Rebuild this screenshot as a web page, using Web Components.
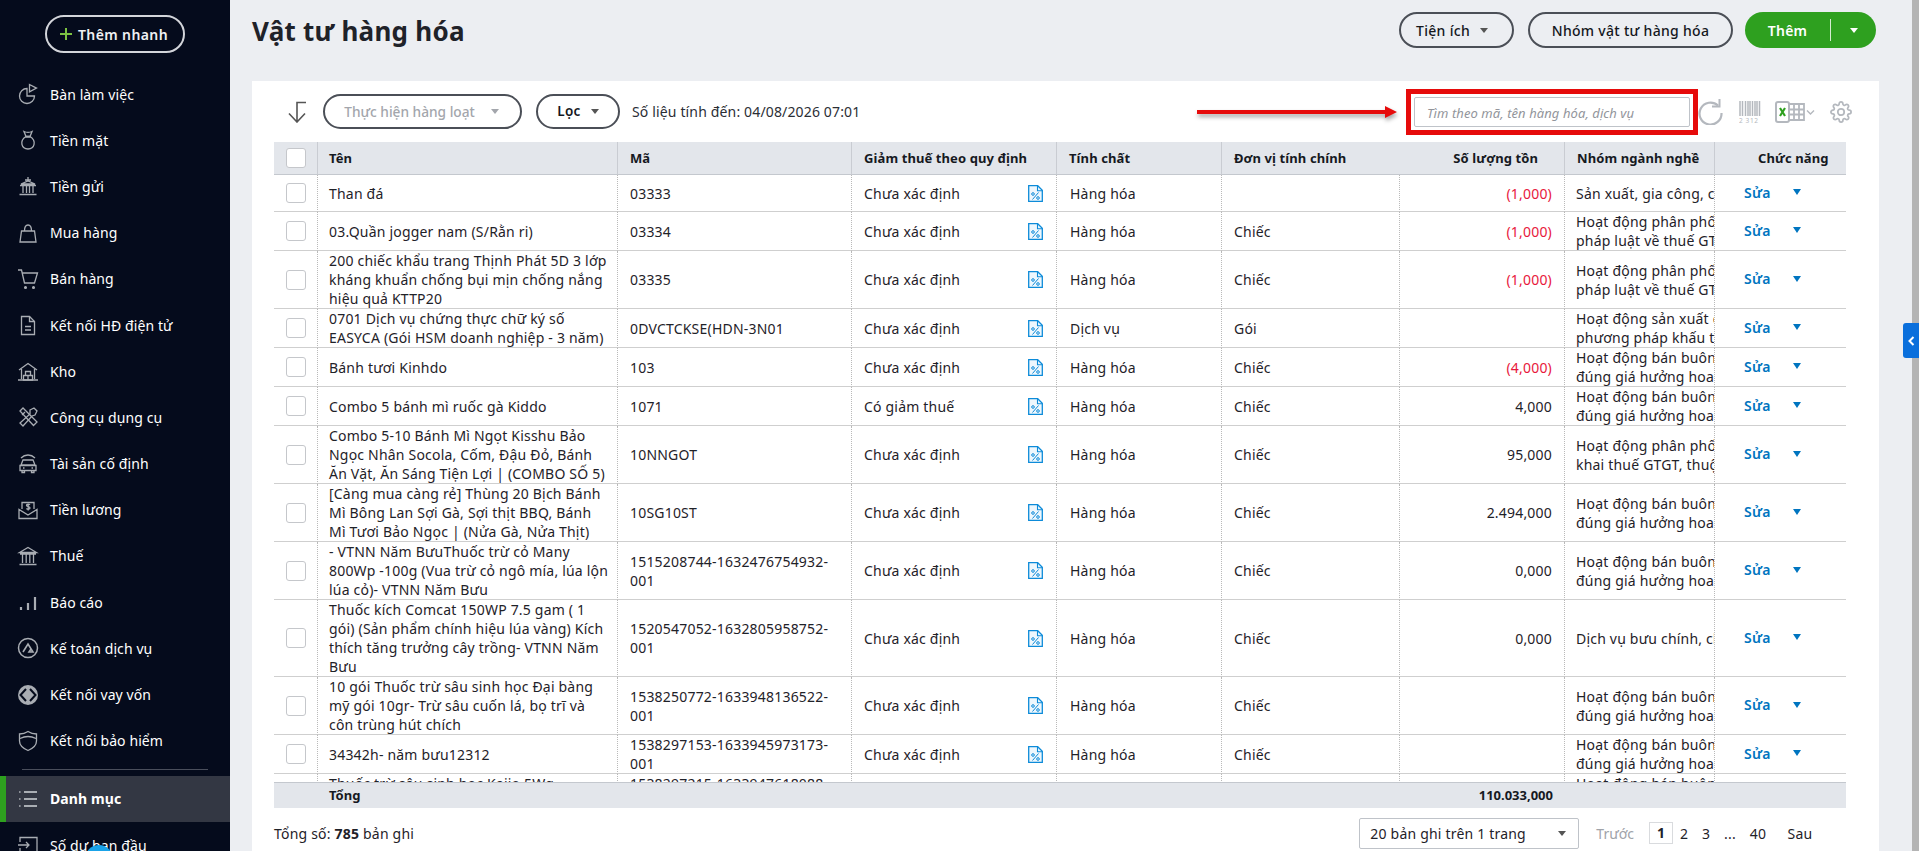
<!DOCTYPE html>
<html lang="vi">
<head>
<meta charset="utf-8">
<title>Vật tư hàng hóa</title>
<style>
  html, body { margin: 0; height: 851px; overflow: hidden; }
  body {
    display: flex;
    font: 14px/19px "Noto Sans", "Liberation Sans", sans-serif;
    letter-spacing: .2px;
    color: #1f2229;
    background: #eceef2;
  }
</style>
</head>
<body>
<app-sidebar>
  <nav-item icon="pie">Bàn làm việc</nav-item>
  <nav-item icon="bag">Tiền mặt</nav-item>
  <nav-item icon="bank">Tiền gửi</nav-item>
  <nav-item icon="shop">Mua hàng</nav-item>
  <nav-item icon="cart">Bán hàng</nav-item>
  <nav-item icon="doc">Kết nối HĐ điện tử</nav-item>
  <nav-item icon="store">Kho</nav-item>
  <nav-item icon="tools">Công cụ dụng cụ</nav-item>
  <nav-item icon="car">Tài sản cố định</nav-item>
  <nav-item icon="salary">Tiền lương</nav-item>
  <nav-item icon="tax">Thuế</nav-item>
  <nav-item icon="bars">Báo cáo</nav-item>
  <nav-item icon="service">Kế toán dịch vụ</nav-item>
  <nav-item icon="loan">Kết nối vay vốn</nav-item>
  <nav-item icon="shield">Kết nối bảo hiểm</nav-item>
  <hr-line></hr-line>
  <nav-item icon="list" active>Danh mục</nav-item>
  <nav-item icon="opening">Số dư ban đầu</nav-item>
</app-sidebar>
<goods-page></goods-page>

<script>
const NAV_ICONS = {
  pie: '<path d="M10 5.5a7.5 7.5 0 1 0 7.5 7.5H10z"/><path d="M12.5 1.5l7 3.6-7 3.8z"/>',
  bag: '<path d="M7 2.5c2 1 6 1 8 0l-2 5H9z"/><path d="M9 7.5C2 12 4.500 20 11 20s9-8 2-12.500z"/><path d="M8.500 8h5"/>',
  bank: '<path d="M11 2v2.500M8 5h6M4 9l7-3 7 3zM3 10.500h16M6 11v7M9.500 11v7M12.500 11v7M16 11v7M2.500 19.500h17"/>',
  shop: '<path d="M3 20l1.500-11h13L19 20z"/><path d="M7.500 9C7.500 1 14.500 1 14.500 9"/>',
  cart: '<path d="M1 2h3.500l3 13h10l3-10H5.500"/><circle cx="8.500" cy="19.500" r=".9" fill="#a9adb3"/><circle cx="16.500" cy="19.500" r=".9" fill="#a9adb3"/>',
  doc: '<path d="M4.500 2.500h8l5 5v13h-13z"/><path d="M12.500 2.500v5h5M8 12.500h6M8 16h6"/>',
  store: '<path d="M2 10l9-6.500 9 6.500M4.500 9v10M17.500 9v10M1 20h20"/><path d="M8.500 11.500h5v4h-5zM6.500 15.500h4.500v4.500H6.500zM11 15.500h4.500v4.500H11z"/>',
  tools: '<path d="M3 5l3-3 14 14-3.500 3.500zM8 6l-3 3"/><path d="M13 4l4-2 3 3-2 4-3 1-9 10-3-3 10-9z"/>',
  car: '<path d="M4 5C8 1 14 1 18 5"/><path d="M6 7h10l2 5H4zM3 12.500h16v5H3zM5 17.500v2h2.500v-2M14.500 17.500v2H17v-2"/><path d="M6 15h1.500M14.500 15H16"/>',
  salary: '<path d="M5 10V3.500h12V10M2 10.500v9h18v-9l-9 5.500z"/><path d="M13 5.800c-1-1-3.500-.8-3.500.6s3.500 1 3.500 2.500-2.500 1.500-3.600.5M11.200 4.500v7"/>',
  tax: '<path d="M2.500 7.500L11 2.500l8.500 5zM3 9h16M5.500 9.500v8.500M9.200 9.500v8.500M12.800 9.500v8.500M16.500 9.500v8.500M2.500 19.500h17"/>',
  bars: '<g stroke-width="2.200"><path d="M4 19v-3M11 19v-7M18 19V6"/></g>',
  service: '<circle cx="11" cy="11" r="9.500" stroke-width="1.500"/><path d="M6 15l5-8 5 8h-4l2-3" stroke-width="1.600"/>',
  loan: '<circle cx="11" cy="11" r="10" fill="#a9adb3" stroke="none"/><path d="M9 5l-5.500 6L9 17M13 5l5.500 6L13 17" stroke="#050b1c" stroke-width="2"/>',
  shield: '<path d="M11 1.500c3 2 6 2.500 8.500 2.500v7c0 5-5 8-8.500 9.500C7.500 19 2.500 16 2.500 11V4C5 4 8 3.500 11 1.500z"/><path d="M3 8.500c3-1.500 5.500-2 8-2s5 .5 8 2"/>',
  list: '<g stroke-width="2"><path d="M7 4h13M7 11h13M7 18h13"/></g><g stroke-width="1.600"><path d="M2 4h1.600M2 11h1.600M2 18h1.600"/></g>',
  opening: '<path d="M3 8V3.500h17v15H3V14M1 11h11M9 8l3 3-3 3"/>'
};

class AppSidebar extends HTMLElement {
  constructor() {
    super();
    this.attachShadow({ mode: "open" });
    this.shadowRoot.innerHTML = `
      <style>
        :host {
          display: block;
          flex: 0 0 230px;
          height: 851px;
          overflow: hidden;
          position: relative;
          background: #050b1c;
          color: #fff;
        }
        .quick-wrap { display: flex; justify-content: center; padding: 15px 0 18px; }
        .quick {
          box-sizing: border-box;
          width: 140px;
          height: 38px;
          border: 2px solid #d3d5da;
          border-radius: 19px;
          display: flex;
          align-items: center;
          justify-content: center;
          gap: 6px;
          padding-right: 2px;
          font-weight: 600;
          font-size: 14px;
          letter-spacing: .4px;
          color: #f0f1f3;
        }
        .fab {
          position: absolute;
          left: 85px;
          top: 845px;
          width: 28px;
          height: 28px;
          border-radius: 50%;
          background: #1aa3e8;
        }
      </style>
      <div class="quick-wrap">
        <div class="quick">
          <svg width="12" height="12" viewBox="0 0 12 12"><path d="M6 0v12M0 6h12" stroke="#7cc242" stroke-width="2"/></svg>
          <span>Thêm nhanh</span>
        </div>
      </div>
      <slot></slot>
      <div class="fab"></div>
    `;
  }
}

class HrLine extends HTMLElement {
  constructor() {
    super();
    this.attachShadow({ mode: "open" });
    this.shadowRoot.innerHTML = `
      <style>
        :host { display: block; height: 1px; margin: 5px 22px 6px; background: #4a4e5b; }
      </style>
    `;
  }
}

class NavItem extends HTMLElement {
  constructor() {
    super();
    this.attachShadow({ mode: "open" });
  }

  connectedCallback() {
    const icon = NAV_ICONS[this.getAttribute("icon")] || "";
    this.shadowRoot.innerHTML = `
      <style>
        :host {
          display: flex;
          align-items: center;
          gap: 11px;
          box-sizing: border-box;
          height: 46.200px;
          padding-left: 17px;
          font-size: 14px;
          letter-spacing: .1px;
          color: #fff;
        }
        :host([active]) {
          background: #333743;
          border-left: 6px solid #2ea01f;
          padding-left: 11px;
          font-weight: 700;
        }
        svg { flex: none; fill: none; stroke: #a9adb3; stroke-width: 1.300; }
      </style>
      <svg width="22" height="22" viewBox="0 0 22 22">${icon}</svg>
      <span><slot></slot></span>
    `;
  }
}

class PillButton extends HTMLElement {
  constructor() {
    super();
    this.attachShadow({ mode: "open" });
    this.shadowRoot.innerHTML = `
      <style>
        :host {
          display: inline-flex;
          align-items: center;
          justify-content: center;
          gap: 10px;
          box-sizing: border-box;
          height: 36px;
          border: 2px solid #4b4f57;
          border-radius: 18px;
          font-weight: 500;
          font-size: 14px;
          letter-spacing: .3px;
          color: #14171d;
        }
        :host([disabled]) { color: #a3a6ac; letter-spacing: 0; font-size: 13.700px; gap: 16px; padding-right: 2px; }
        .caret {
          display: none;
          border: 4.500px solid transparent;
          border-top: 5px solid #555;
          border-bottom: 0;
        }
        :host([caret]) .caret { display: block; }
        :host([disabled]) .caret { border-top-color: #a3a6ac; }
      </style>
      <slot></slot><i class="caret"></i>
    `;
  }
}

class PageHeader extends HTMLElement {
  constructor() {
    super();
    this.attachShadow({ mode: "open" });
    this.shadowRoot.innerHTML = `
      <style>
        :host {
          display: flex;
          align-items: center;
          height: 81px;
          box-sizing: border-box;
          padding: 0 36px 21px 22px;
        }
        h1 { margin: 2px auto 0 0; font-size: 26px; line-height: 36px; letter-spacing: .25px; font-weight: 700; color: #1f2229; }
        .utils { width: 115px; margin-right: 14px; padding-right: 9px; }
        .groups { width: 205px; margin-right: 12px; }
        .add {
          display: flex;
          align-items: center;
          width: 131px;
          height: 36px;
          border-radius: 18px;
          background: #2ea01f;
          color: #fff;
          font-weight: 600;
        }
        .add b { width: 85px; text-align: center; font-weight: 600; }
        .add i { width: 1px; height: 22px; background: #d5ecd1; }
        .add span { flex: 1; display: flex; justify-content: center; }
        .add em { border: 4.500px solid transparent; border-top: 5px solid #fff; border-bottom: 0; }
      </style>
      <h1>Vật tư hàng hóa</h1>
      <pill-button class="utils" caret>Tiện ích</pill-button>
      <pill-button class="groups">Nhóm vật tư hàng hóa</pill-button>
      <div class="add"><b>Thêm</b><i></i><span><em></em></span></div>
    `;
  }
}

class GoodsToolbar extends HTMLElement {
  constructor() {
    super();
    this.attachShadow({ mode: "open" });
    this.shadowRoot.innerHTML = `
      <style>
        :host {
          display: flex;
          align-items: center;
          height: 61px;
          box-sizing: border-box;
          padding: 9px 0 9px 35px;
        }
        .sort { margin-right: 16px; flex: none; }
        pill-button { height: 35px; }
        .bulk { width: 199px; margin-right: 14px; }
        .filter { width: 84px; margin-right: 12px; font-weight: 600; font-size: 13.500px; }
        .stamp { color: #2b2e35; margin-right: auto; white-space: nowrap; letter-spacing: .15px; }
        .arrow { flex: none; margin-right: 9px; filter: drop-shadow(1px 3px 2px rgba(0,0,0,.35)); }
        .mark {
          box-sizing: border-box;
          width: 292px;
          height: 46px;
          padding: 3px;
          border: 5px solid #e60b0b;
          background: #fff;
        }
        .search {
          box-sizing: border-box;
          height: 100%;
          border: 1px solid #bfc3c9;
          border-radius: 2px;
          padding: 6px 12px;
          font-style: italic;
          font-size: 13px;
          letter-spacing: .08px;
          color: #92959b;
          white-space: nowrap;
        }
        .tools { display: flex; align-items: center; flex: none; fill: none; stroke: #b4b8be; padding-right: 27px; }
      </style>
      <svg class="sort" width="20" height="22" viewBox="0 0 20 22" fill="none" stroke="#555" stroke-width="1.600">
        <path d="M19 1.500H10V21M2 12.500l8 8.500 8-8.500"/>
      </svg>
      <pill-button class="bulk" caret disabled>Thực hiện hàng loạt</pill-button>
      <pill-button class="filter" caret>Lọc</pill-button>
      <span class="stamp">Số liệu tính đến: 04/08/2026 07:01</span>
      <svg class="arrow" width="200" height="12" viewBox="0 0 200 12">
        <path d="M0 4h188V0l12 6-12 6V8H0z" fill="#e60b0b"/>
      </svg>
      <div class="mark"><div class="search">Tìm theo mã, tên hàng hóa, dịch vụ</div></div>
      <div class="tools">
        <svg width="25" height="26" viewBox="0 0 25 26" stroke-width="2.200" style="margin-right:16px">
          <path d="M20 6.500A11 11 0 1 0 23.500 14"/><path d="M21.500 0v7.500H14" stroke-width="2"/>
        </svg>
        <svg width="22" height="23" viewBox="0 0 22 23" style="margin-right:14px">
          <path d="M1 1v15M3.500 1v15M6.500 1v15M9 1v15M11 1v15M13.500 1v15M16 1v15M18 1v15M20.500 1v15" stroke-width="1.500"/>
          <text x="0" y="23" font-size="6.500" font-family="Noto Sans" fill="#b4b8be" stroke="none" letter-spacing=".6">2 312</text>
        </svg>
        <svg width="41" height="22" viewBox="0 0 41 22" style="margin-right:14px">
          <rect x="1" y="1" width="13" height="20" rx="2" stroke-width="2"/>
          <path d="M14 3h15v16H14M19 3v16M24 3v16M14 8.500h15M14 13.500h15" stroke-width="1.800"/>
          <path d="M5 7l5 8M10 7l-5 8" stroke="#2ea01f" stroke-width="2.200"/>
          <path d="M32 9.500l3.500 3.500 3.500-3.500" stroke-width="1.400"/>
        </svg>
        <svg width="22" height="22" viewBox="0 0 24 24" stroke-width="1.900">
          <circle cx="12" cy="12" r="3.500"/>
          <path d="M19.400 15a1.650 1.650 0 0 0 .33 1.820l.06.06a2 2 0 0 1 0 2.830 2 2 0 0 1-2.830 0l-.06-.06a1.650 1.650 0 0 0-1.820-.33 1.650 1.650 0 0 0-1 1.510V21a2 2 0 0 1-2 2 2 2 0 0 1-2-2v-.09A1.650 1.650 0 0 0 9 19.400a1.650 1.650 0 0 0-1.820.33l-.06.06a2 2 0 0 1-2.830 0 2 2 0 0 1 0-2.830l.06-.06a1.650 1.650 0 0 0 .33-1.820 1.650 1.650 0 0 0-1.510-1H3a2 2 0 0 1-2-2 2 2 0 0 1 2-2h.09A1.650 1.650 0 0 0 4.600 9a1.650 1.650 0 0 0-.33-1.820l-.06-.06a2 2 0 0 1 0-2.830 2 2 0 0 1 2.830 0l.06.06a1.650 1.650 0 0 0 1.820.33H9a1.650 1.650 0 0 0 1-1.510V3a2 2 0 0 1 2-2 2 2 0 0 1 2 2v.09a1.650 1.650 0 0 0 1 1.510 1.650 1.650 0 0 0 1.820-.33l.06-.06a2 2 0 0 1 2.830 0 2 2 0 0 1 0 2.830l-.06.06a1.650 1.650 0 0 0-.33 1.820V9a1.650 1.650 0 0 0 1.510 1H21a2 2 0 0 1 2 2 2 2 0 0 1-2 2h-.09a1.650 1.650 0 0 0-1.510 1z"/>
        </svg>
      </div>
    `;
  }
}

// hoạt động text is cut by the column in the original, so lines are given by hand
const SELL = ["Hoạt động bán buôn", "đúng giá hưởng hoa hồng"];
const DIST = "Hoạt động phân phối";
const GOODS = [
  { name: "Than đá", code: "03333", qty: "(1,000)", group: ["Sản xuất, gia công, chế biến"] },
  { name: "03.Quần jogger nam (S/Rằn ri)", code: "03334", unit: "Chiếc", qty: "(1,000)", group: [DIST, "pháp luật về thuế GTGT"] },
  { name: "200 chiếc khẩu trang Thịnh Phát 5D 3 lớp kháng khuẩn chống bụi mịn chống nắng hiệu quả KTTP20", code: "03335", unit: "Chiếc", qty: "(1,000)", group: [DIST, "pháp luật về thuế GTGT"] },
  { name: "0701 Dịch vụ chứng thực chữ ký số EASYCA (Gói HSM doanh nghiệp - 3 năm)", code: "0DVCTCKSE(HDN-3N01", kind: "Dịch vụ", unit: "Gói", group: ["Hoạt động sản xuất chế", "phương pháp khấu trừ"] },
  { name: "Bánh tươi Kinhdo", code: "103", unit: "Chiếc", qty: "(4,000)", group: SELL },
  { name: "Combo 5 bánh mì ruốc gà Kiddo", code: "1071", tax: "Có giảm thuế", unit: "Chiếc", qty: "4,000", group: SELL },
  { name: "Combo 5-10 Bánh Mì Ngọt Kisshu Bảo Ngọc Nhân Socola, Cốm, Đậu Đỏ, Bánh Ăn Vặt, Ăn Sáng Tiện Lợi | (COMBO SỐ 5)", code: "10NNGOT", unit: "Chiếc", qty: "95,000", group: [DIST, "khai thuế GTGT, thuộc"] },
  { name: "[Càng mua càng rẻ] Thùng 20 Bịch Bánh Mì Bông Lan Sợi Gà, Sợi thịt BBQ, Bánh Mì Tươi Bảo Ngọc | (Nửa Gà, Nửa Thịt)", code: "10SG10ST", unit: "Chiếc", qty: "2.494,000", group: SELL },
  { name: "- VTNN Năm BưuThuốc trừ cỏ Many 800Wp -100g (Vua trừ cỏ ngô mía, lúa lộn lúa cỏ)- VTNN Năm Bưu", code: "1515208744-1632476754932-001", unit: "Chiếc", qty: "0,000", group: SELL },
  { name: "Thuốc kích Comcat 150WP 7.5 gam ( 1 gói) (Sản phẩm chính hiệu lúa vàng) Kích thích tăng trưởng cây trồng- VTNN Năm Bưu", code: "1520547052-1632805958752-001", unit: "Chiếc", qty: "0,000", group: ["Dịch vụ bưu chính, chuyển phát"] },
  { name: "10 gói Thuốc trừ sâu sinh học Đại bàng mỹ gói 10gr- Trừ sâu cuốn lá, bọ trĩ và côn trùng hút chích", code: "1538250772-1633948136522-001", unit: "Chiếc", group: SELL },
  { name: "34342h- năm bưu12312", code: "1538297153-1633945973173-001", unit: "Chiếc", group: SELL },
  { name: "Thuốc trừ sâu sinh học Kaijo 5Wg<br>gói 10gr", code: "1538297215-1633947618088-001", unit: "Chiếc", group: SELL }
];

const TAX_ICON = `
  <svg class="tax" width="15" height="17" viewBox="0 0 15 17" fill="none" stroke="#0d8bd9">
    <path d="M.7.7h9l4.600 4.600v11H.7z" stroke-width="1.300" fill="#eef7fd"/>
    <path d="M9.500.7v5h4.800" stroke-width="1.100"/>
    <circle cx="5" cy="9" r="1.300" stroke-width="1"/>
    <circle cx="10" cy="13" r="1.300" stroke-width="1"/>
    <path d="M10.500 7.500l-6 7" stroke-width="1"/>
  </svg>`;

class GoodsTable extends HTMLElement {
  constructor() {
    super();
    this.attachShadow({ mode: "open" });
  }

  connectedCallback() {
    const cols = [44, 300, 234, 205, 165, 178, 165, 150, 131];
    const colgroup = cols.map((w) => `<col style="width:${w}px">`).join("");
    const rows = GOODS.map((g) => `
      <tr>
        <td class="chk"><span class="box"></span></td>
        <td class="name">${g.name}</td>
        <td>${g.code}</td>
        <td><div class="taxcell"><span>${g.tax || "Chưa xác định"}</span>${TAX_ICON}</div></td>
        <td class="kind">${g.kind || "Hàng hóa"}</td>
        <td>${g.unit || ""}</td>
        <td class="qty ${g.qty && g.qty[0] === "(" ? "neg" : ""}">${g.qty || ""}</td>
        <td class="grp"><div>${g.group.join("<br>")}</div></td>
        <td class="act"><div><b>Sửa</b><i></i></div></td>
      </tr>`).join("");

    this.shadowRoot.innerHTML = `
      <style>
        :host { display: block; margin: 0 33px 0 22px; }
        .scroll { height: 640px; overflow: hidden; }
        table { width: 1572px; table-layout: fixed; border-collapse: separate; border-spacing: 0; }
        th {
          height: 32px;
          padding: 0 12px;
          background: #e3e6eb;
          border-bottom: 1px solid #c4c8ce;
          border-right: 1px solid #c9ccd2;
          text-align: left;
          font-size: 13px;
          letter-spacing: .1px;
          font-weight: 700;
          color: #16191f;
        }
        th.nob { border-right: 0; }
        th.right { text-align: right; padding-right: 26px; }
        th.func { padding-left: 43px; padding-right: 0; border-right: 0; }
        td {
          height: 34px;
          padding: 0 12px;
          border-bottom: 1px solid #cfcfcf;
          border-right: 1px dotted #b9b9b9;
          background: #fff;
        }
        td:last-child { border-right: 0; }
        th:nth-child(2), td.name { padding: 0 8px 0 11px; }
        td.kind { padding-left: 13px; }
        .box, .head-box {
          display: block;
          box-sizing: border-box;
          width: 20px;
          height: 20px;
          margin: 0 auto;
          background: #fff;
          border: 1px solid #c5c7cb;
          border-radius: 3px;
        }
        td.chk, th.chk { padding: 0; }
        .taxcell { display: flex; align-items: center; justify-content: space-between; padding-right: 1px; }
        .tax { flex: none; }
        .qty { text-align: right; }
        .neg { color: #e8183c; }
        td.grp { padding: 0 0 0 11px; }
        .grp div { overflow: hidden; white-space: nowrap; }
        td.act { padding: 0 0 2px 29px; }
        .act div { display: flex; align-items: center; }
        .act b { width: 49px; font-weight: 600; color: #0075c0; }
        .act i { border: 4px solid transparent; border-top: 6px solid #0075c0; border-bottom: 0; }
        .total {
          display: flex;
          justify-content: space-between;
          align-items: center;
          height: 26px;
          box-sizing: border-box;
          border-top: 1px solid #c4c8ce;
          background: #e3e6eb;
          font-size: 13px;
          letter-spacing: 0;
          font-weight: 700;
          color: #16191f;
          padding: 0 293px 0 55px;
        }
      </style>
      <div class="scroll">
        <table>
          <colgroup>${colgroup}</colgroup>
          <thead>
            <tr>
              <th class="chk"><span class="head-box"></span></th>
              <th>Tên</th>
              <th>Mã</th>
              <th>Giảm thuế theo quy định</th>
              <th>Tính chất</th>
              <th class="nob">Đơn vị tính chính</th>
              <th class="right">Số lượng tồn</th>
              <th>Nhóm ngành nghề</th>
              <th class="func">Chức năng</th>
            </tr>
          </thead>
          <tbody>${rows}</tbody>
        </table>
      </div>
      <div class="total"><span>Tổng</span><span>110.033,000</span></div>
    `;
  }
}

class TablePager extends HTMLElement {
  constructor() {
    super();
    this.attachShadow({ mode: "open" });
    this.shadowRoot.innerHTML = `
      <style>
        :host {
          display: flex;
          align-items: center;
          height: 50px;
          box-sizing: border-box;
          padding: 0 0 0 22px;
        }
        .count { margin-right: auto; }
        .size {
          box-sizing: border-box;
          display: flex;
          align-items: center;
          justify-content: space-between;
          width: 220px;
          height: 31px;
          margin-right: 17px;
          padding: 0 12px 0 10px;
          border: 1px solid #bfc3c9;
          border-radius: 2px;
        }
        .size i { border: 4.500px solid transparent; border-top: 5.500px solid #555; border-bottom: 0; }
        .prev { color: #a0a3a9; margin-right: 15px; letter-spacing: 0; }
        .cur {
          box-sizing: border-box;
          width: 24px;
          height: 22px;
          line-height: 20px;
          text-align: center;
          border: 1px solid #d9dbde;
          font-weight: 700;
        }
        .p { text-align: center; }
        .nums { display: flex; align-items: center; padding-right: 52px; }
      </style>
      <span class="count">Tổng số: <b style="font-weight:700">785</b> bản ghi</span>
      <div class="size"><span>20 bản ghi trên 1 trang</span><i></i></div>
      <span class="prev">Trước</span>
      <div class="nums">
        <span class="cur">1</span>
        <span class="p" style="width:22px">2</span>
        <span class="p" style="width:22px">3</span>
        <span class="p" style="width:26px">...</span>
        <span class="p" style="width:30px">40</span>
        <span class="p" style="width:54px">Sau</span>
      </div>
    `;
  }
}

class GoodsPage extends HTMLElement {
  constructor() {
    super();
    this.attachShadow({ mode: "open" });
    this.shadowRoot.innerHTML = `
      <style>
        :host {
          display: flex;
          flex: 1;
          height: 851px;
          position: relative;
          overflow: hidden;
        }
        .content { flex: 1; min-width: 0; }
        .panel { margin: 0 33px 0 22px; height: 770px; background: #fff; }
        .scrollbar { flex: 0 0 7px; background: #b4b4b4; }
        .tab {
          position: absolute;
          right: 0;
          top: 323px;
          width: 16px;
          height: 35px;
          border-radius: 3px 0 0 3px;
          background: #0a6fdc;
          display: flex;
          align-items: center;
          justify-content: center;
        }
      </style>
      <div class="content">
        <page-header></page-header>
        <div class="panel">
          <goods-toolbar></goods-toolbar>
          <goods-table></goods-table>
          <table-pager></table-pager>
        </div>
      </div>
      <div class="scrollbar"></div>
      <div class="tab">
        <svg width="7" height="10" viewBox="0 0 7 10" fill="none" stroke="#fff" stroke-width="2"><path d="M5.500 1L1.500 5l4 4"/></svg>
      </div>
    `;
  }
}

customElements.define("nav-item", NavItem);
customElements.define("hr-line", HrLine);
customElements.define("app-sidebar", AppSidebar);
customElements.define("pill-button", PillButton);
customElements.define("page-header", PageHeader);
customElements.define("goods-toolbar", GoodsToolbar);
customElements.define("goods-table", GoodsTable);
customElements.define("table-pager", TablePager);
customElements.define("goods-page", GoodsPage);
</script>
</body>
</html>
